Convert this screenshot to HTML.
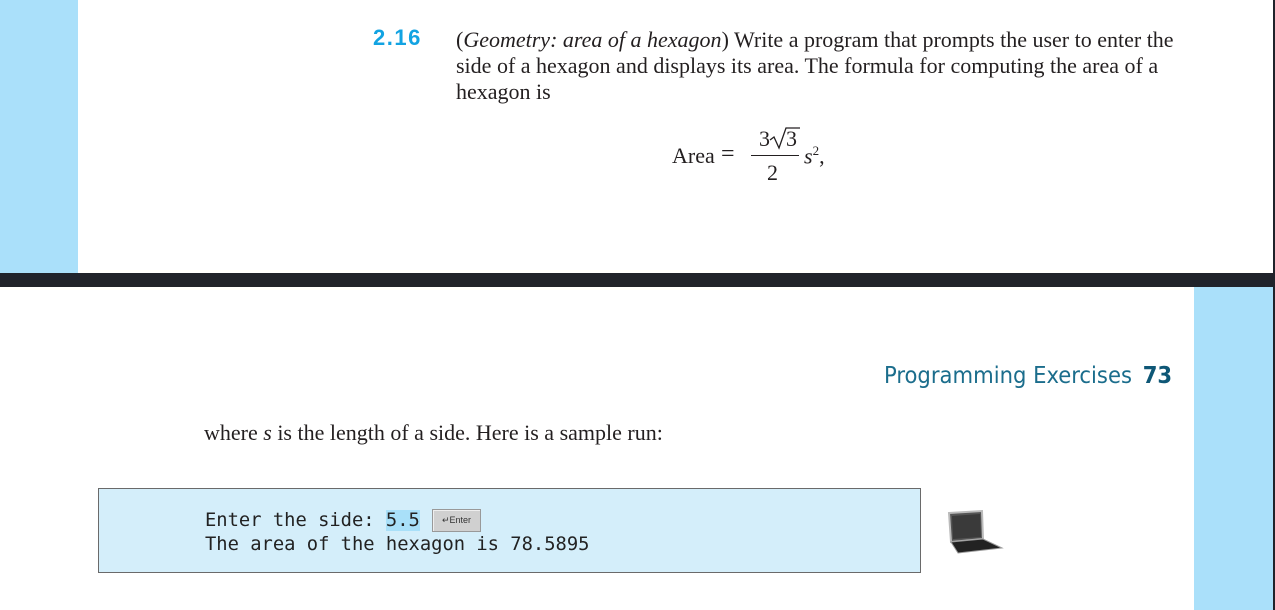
<!DOCTYPE html>
<html><head><style>
body{margin:0;width:1275px;height:610px;position:relative;overflow:hidden;background:#fff;font-family:"Liberation Serif",serif;color:#231f20}
.a{position:absolute;white-space:nowrap}
.s{font-size:22px}
.m{font-family:"DejaVu Sans Mono","Liberation Mono",monospace;font-size:18.8px;color:#222}
</style></head><body>
<div class="a" style="left:0;top:0;width:78px;height:273px;background:#aae0fa"></div>
<div class="a" style="left:0;top:273px;width:1275px;height:14px;background:#20232b"></div>
<div class="a" style="left:1273px;top:0;width:2px;height:610px;background:#20232b"></div>
<div class="a" style="left:1194px;top:287px;width:79px;height:323px;background:#aae0fa"></div>

<div class="a" style="left:373px;top:25px;font-family:'Liberation Sans',sans-serif;font-weight:bold;font-size:22px;color:#12a3e2;letter-spacing:1.5px">2.16</div>
<div class="a s" style="left:456px;top:27px;line-height:26px">(<i>Geometry: area of a hexagon</i>) Write a program that prompts the user to enter the<br>side of a hexagon and displays its area. The formula for computing the area of a<br>hexagon is</div>

<div class="a s" style="left:672px;top:143px">Area</div>
<div class="a s" style="left:721px;top:141px;font-size:24px">=</div>
<div class="a s" style="left:759px;top:126px">3</div>
<svg class="a" style="left:769px;top:126px" width="32" height="24"><path d="M1 14 L5 11 L10 22 L17 2 L31 2" fill="none" stroke="#231f20" stroke-width="1.3"/></svg>
<div class="a s" style="left:786px;top:126px">3</div>
<div class="a" style="left:751px;top:155px;width:48px;height:1px;background:#231f20"></div>
<div class="a s" style="left:767px;top:160px">2</div>
<div class="a s" style="left:804px;top:143px"><i>s</i><sup style="font-size:13px">2</sup>,</div>

<div class="a" style="left:884px;top:361px;font-family:'DejaVu Sans Condensed','Liberation Sans Narrow','Liberation Sans',sans-serif;font-size:23.5px;color:#1b6d8c;font-stretch:condensed">Programming Exercises <b style="color:#0e5776;margin-left:4px">73</b></div>

<div class="a s" style="left:204px;top:420px">where <i>s</i> is the length of a side. Here is a sample run:</div>

<div class="a" style="left:98px;top:488px;width:821px;height:83px;background:#d4eefa;border:1px solid #6a6a6a"></div>
<div class="a m" style="left:205px;top:510px">Enter the side: <span style="background:#a9e0f9">5.5</span></div>
<div class="a" style="left:432px;top:509px;width:47px;height:21px;background:#d0d0d0;border:1px solid #999;box-shadow:inset 1px 1px 0 #eee;font-family:'Liberation Sans',sans-serif;font-size:9px;line-height:21px;text-align:center;color:#333">↵Enter</div>
<div class="a m" style="left:205px;top:534px">The area of the hexagon is 78.5895</div>

<svg class="a" style="left:946px;top:508px" width="58" height="48">
<path d="M3 5 L36 3 L37 31 L5 34 Z" fill="#555" stroke="#bbb" stroke-width="2"/>
<path d="M6 8 L34 6 L35 29 L7 31 Z" fill="#3a3a3a"/>
<path d="M5 34 L37 31 L56 40 L12 45 Z" fill="#222" stroke="#999" stroke-width="1"/>
</svg>
</body></html>
